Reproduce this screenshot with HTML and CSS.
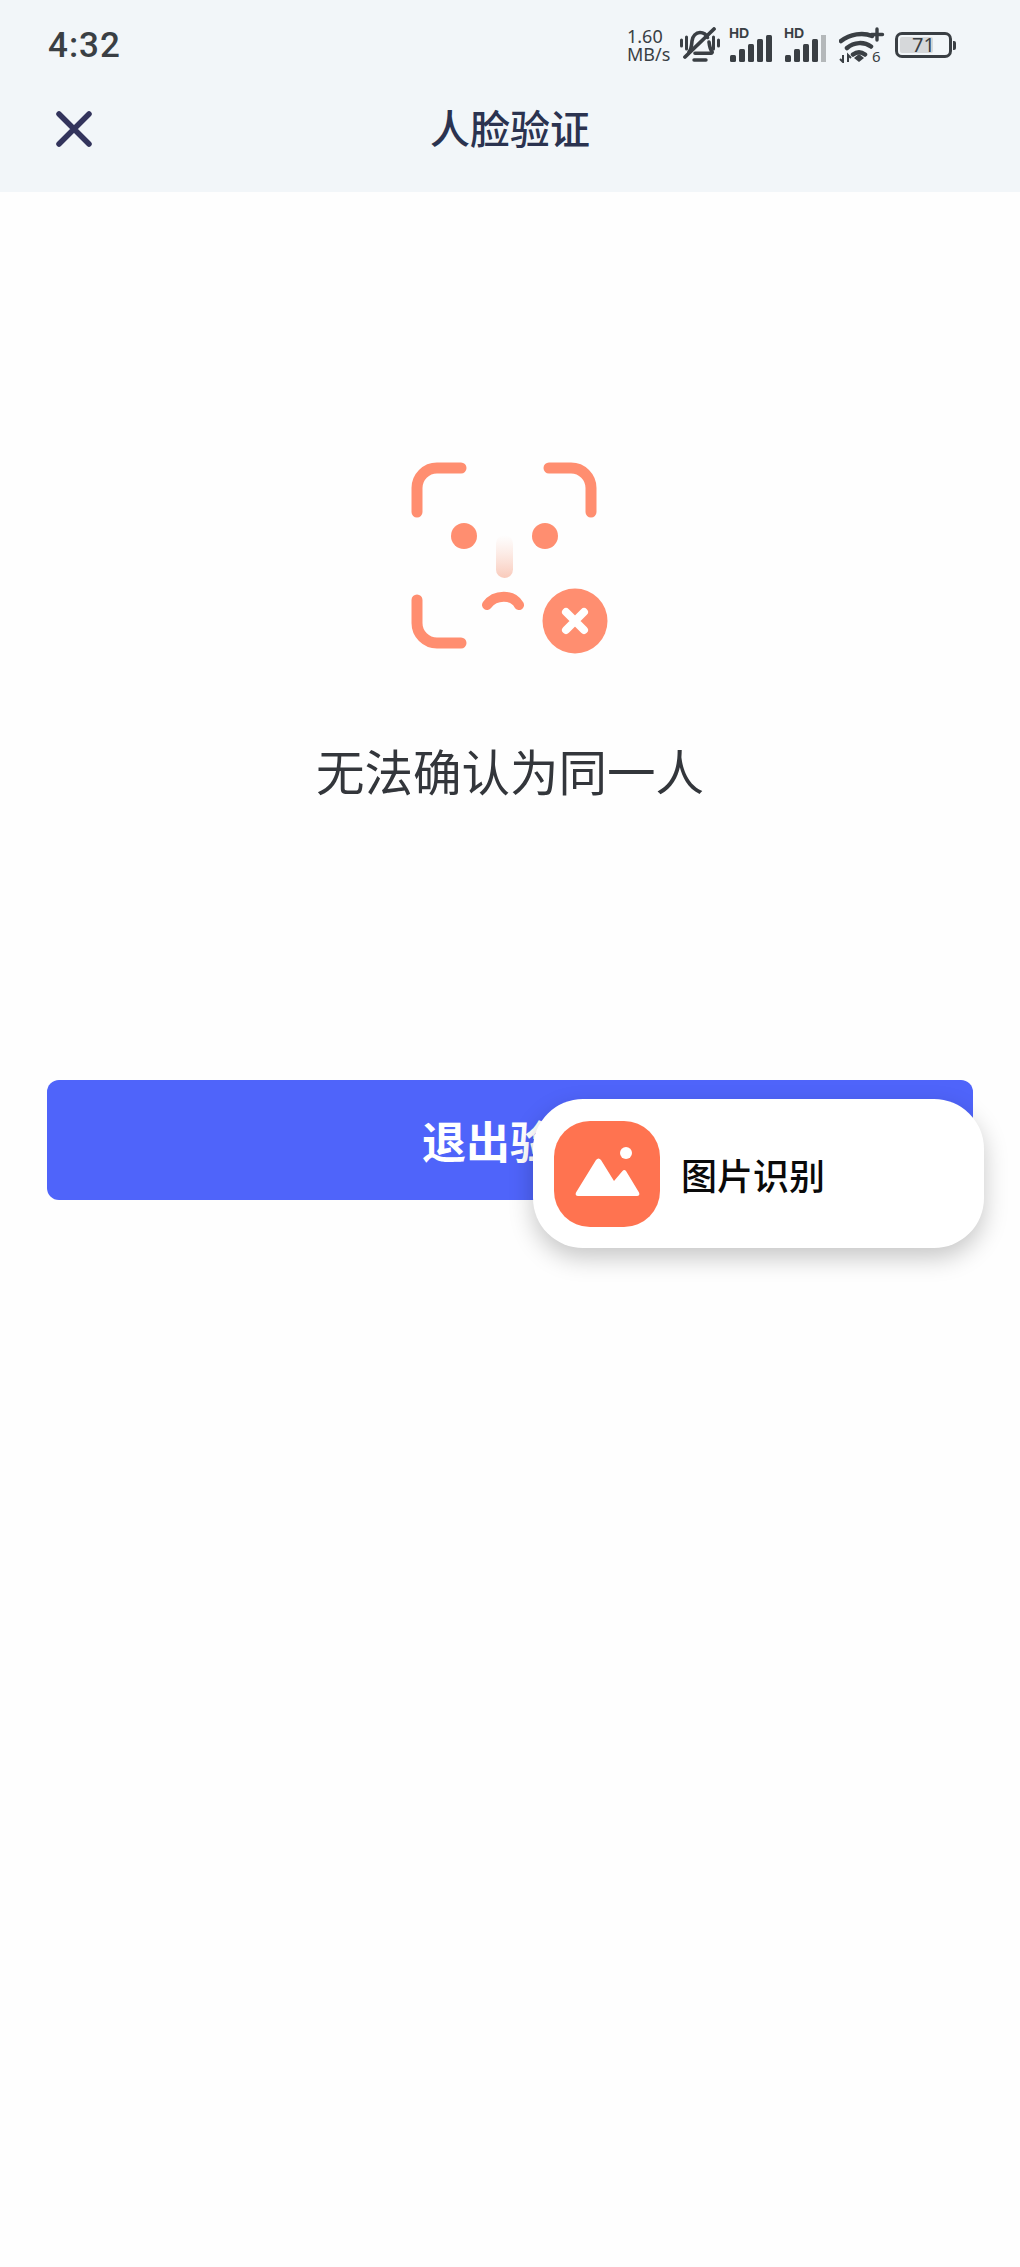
FILE: index.html
```html
<!DOCTYPE html>
<html lang="zh-CN">
  <head>
    <meta charset="UTF-8">
    <meta name="viewport" content="width=device-width, initial-scale=1">
    <title>人脸验证</title>
    <link rel="stylesheet" href="styles.css">
  </head>
  <body>
    <header class="top">
      <div class="status-bar">
        <span class="time">4:32</span>
        <div class="status-icons">
          <div class="speed">1.60 MB/s</div>
          <svg class="bell" viewBox="0 0 40 36" width="40" height="36">
            <path d="M9 25c2.500-3 2.500-6 3-11 .5-5 4-8.500 8-8.500 3.500 0 6 1.500 7.500 5M29 15c.5 4 1 7 3 9.500.6 1-.2 1.700-1 1.700H15" fill="none" stroke="#3a3f44" stroke-width="3.600" stroke-linecap="round"/>
            <path d="M34 2 5 30" stroke="#3a3f44" stroke-width="3.800" stroke-linecap="round"/>
            <path d="M1.500 13v6M6.500 10v12M33.500 10v12M38.500 13v6" stroke="#3a3f44" stroke-width="3" stroke-linecap="round"/>
            <path d="M14 33h12" stroke="#3a3f44" stroke-width="3.400" stroke-linecap="round"/>
          </svg>
          <div class="signal">
            <span class="hd">HD</span>
            <svg viewBox="0 0 44 28" width="44" height="28">
              <g fill="#3a3f44">
                <rect x="1" y="21" width="6" height="7" rx="1.500"/>
                <rect x="10" y="15" width="6" height="13" rx="1.500"/>
                <rect x="19" y="10" width="6" height="18" rx="1.500"/>
                <rect x="28" y="5" width="6" height="23" rx="1.500"/>
                <rect x="37" y="1" width="6" height="27" rx="1.500"/>
              </g>
            </svg>
          </div>
          <div class="signal">
            <span class="hd">HD</span>
            <svg viewBox="0 0 44 28" width="44" height="28">
              <g fill="#3a3f44">
                <rect x="1" y="21" width="6" height="7" rx="1.500"/>
                <rect x="10" y="15" width="6" height="13" rx="1.500"/>
                <rect x="19" y="10" width="6" height="18" rx="1.500"/>
                <rect x="28" y="5" width="6" height="23" rx="1.500"/>
              </g>
              <rect x="37" y="1" width="5" height="27" fill="#b4b8ba"/>
            </svg>
          </div>
          <div class="wifi">
            <svg viewBox="0 0 46 36" width="46" height="36">
              <path d="M2 14C11 7 24 5 33 9M8 21c7-6 17-6.500 24-1.500M14 27.500c4-3 8-3 12 0" fill="none" stroke="#3a3f44" stroke-width="4.500" stroke-linecap="round"/>
              <path d="M15 31l5-4 5 4-5 4z" fill="#3a3f44"/>
              <path d="M38 2v11M32.500 7.500h11" stroke="#3a3f44" stroke-width="3.400" stroke-linecap="round"/>
              <path d="M4 28v7L1 32M9 35v-7l3 3" fill="none" stroke="#3a3f44" stroke-width="2"/>
            </svg>
            <span class="wifi-num">6</span>
          </div>
          <div class="battery">
            <div class="battery-body">
              <div class="battery-fill"></div>
              <span class="battery-num">71</span>
            </div>
            <div class="battery-nub"></div>
          </div>
        </div>
      </div>
      <nav class="nav-bar">
        <svg class="close" viewBox="0 0 36 36" width="36" height="36">
          <path d="M3 3 33 33M33 3 3 33" stroke="#33345c" stroke-width="5.500" stroke-linecap="round"/>
        </svg>
        <h1 class="nav-title">人脸验证</h1>
      </nav>
    </header>

    <main class="content">
      <svg class="face" viewBox="0 0 240 240" width="240" height="240">
        <defs>
          <linearGradient id="nose" x1="0" y1="0" x2="0" y2="1">
            <stop offset="0" stop-color="#fbd9cd" stop-opacity="0"/>
            <stop offset="1" stop-color="#f9cabb"/>
          </linearGradient>
        </defs>
        <g fill="none" stroke="#ff8e70" stroke-width="11" stroke-linecap="round">
          <path d="M28 72V48a20 20 0 0 1 20-20h24"/>
          <path d="M160 28h22a20 20 0 0 1 20 20v24"/>
          <path d="M28 160v23a20 20 0 0 0 20 20h24"/>
          <path d="M98 165c8-11 26-11 32 0" stroke-width="10"/>
        </g>
        <circle cx="75" cy="96" r="13" fill="#ff8e70"/>
        <circle cx="156" cy="96" r="13" fill="#ff8e70"/>
        <rect x="107" y="95" width="17" height="43" rx="8.500" fill="url(#nose)"/>
        <circle cx="186" cy="181" r="32.500" fill="#ff8e70"/>
        <path d="M177 172l18 18M195 172l-18 18" stroke="#fff" stroke-width="8" stroke-linecap="round"/>
      </svg>
      <p class="message">无法确认为同一人</p>
      <button class="exit-btn" type="button">退出验证</button>
    </main>

    <div class="float-card">
      <div class="app-icon">
        <svg viewBox="0 0 106 106" width="106" height="106">
          <circle cx="72" cy="32" r="6" fill="#fff"/>
          <path d="M24 75h59c2 0 3-1.500 2-3.500L72 50c-1-1.500-2.500-1.500-3.500 0L60 60 47 39c-1.500-2-3.500-2-5 0L22 71.500c-1 2 0 3.500 2 3.500z" fill="#fff"/>
        </svg>
      </div>
      <span class="card-label">图片识别</span>
    </div>
  </body>
</html>
```

FILE: styles.css
```css
* {
  box-sizing: border-box;
}
body {
  margin: 0;
  position: relative;
  min-height: 2267px;
  background-color: #fefefe;
  font-family: "Noto Sans CJK SC", "Noto Sans", sans-serif;
}

/* top area */
.top {
  height: 192px;
  background-color: #f2f6f9;
}
.status-bar {
  display: flex;
  justify-content: space-between;
  align-items: center;
  height: 90px;
  padding: 0 64px 0 48px;
}
.time {
  font-family: Roboto, sans-serif;
  font-size: 35px;
  font-weight: 500;
  letter-spacing: 1px;
  color: #3a3f44;
}
.status-icons {
  display: flex;
  align-items: center;
  color: #3a3f44;
}
.speed {
  width: 53px;
  font-family: "Noto Sans", sans-serif;
  font-size: 18px;
  line-height: 18px;
}
.bell {
  margin-right: 9px;
}
.signal {
  position: relative;
  width: 44px;
  height: 34px;
  margin-right: 11px;
  display: flex;
  align-items: flex-end;
}
.hd {
  position: absolute;
  left: 0;
  top: -3px;
  font-family: "Liberation Sans", sans-serif;
  font-size: 14px;
  font-weight: 700;
  line-height: 16px;
}
.wifi {
  position: relative;
  width: 46px;
  height: 36px;
  margin-right: 10px;
}
.wifi-num {
  position: absolute;
  left: 33px;
  top: 21px;
  font-family: "Noto Sans", sans-serif;
  font-size: 15px;
  line-height: 16px;
}
.battery {
  display: flex;
  align-items: center;
  gap: 1px;
}
.battery-body {
  position: relative;
  width: 57px;
  height: 26px;
  border: 3px solid #3a3f44;
  border-radius: 7px;
  padding: 2px;
}
.battery-fill {
  width: 71%;
  height: 100%;
  background-color: #d6d8da;
  border-radius: 2px;
}
.battery-num {
  position: absolute;
  left: 0;
  right: 0;
  top: -1px;
  font-family: "Noto Sans", sans-serif;
  font-size: 20px;
  line-height: 22px;
  text-align: center;
}
.battery-nub {
  width: 3px;
  height: 9px;
  background-color: #3a3f44;
  border-radius: 0 2px 2px 0;
}
.nav-bar {
  position: relative;
  display: flex;
  align-items: center;
  justify-content: center;
  height: 80px;
  margin-top: -3px;
}
.close {
  position: absolute;
  left: 56px;
  top: 24px;
}
.nav-title {
  margin: 0;
  font-size: 40px;
  font-weight: 500;
  color: #2b3350;
  line-height: 56px;
}

/* result */
.content {
  display: flex;
  flex-direction: column;
  align-items: center;
  padding: 248px 47px 0;
}
.face {
  display: block;
  margin-left: -2px;
}
.message {
  margin: 55px 0 0;
  font-size: 48.500px;
  line-height: 70px;
  color: #33363b;
  text-align: center;
}
.exit-btn {
  width: 100%;
  height: 120px;
  margin-top: 275px;
  padding-bottom: 2px;
  background-color: #4f64fa;
  border: none;
  border-radius: 12px;
  color: white;
  font-family: inherit;
  font-size: 44px;
  font-weight: 700;
}

/* floating card over the button */
.float-card {
  position: absolute;
  left: 533px;
  top: 1099px;
  width: 451px;
  height: 149px;
  display: flex;
  align-items: center;
  gap: 21px;
  padding-left: 21px;
  background-color: white;
  border-radius: 50px;
  box-shadow: 0 10px 24px rgba(0, 0, 0, 0.22);
}
.app-icon {
  width: 106px;
  height: 106px;
  background-color: #ff7350;
  border-radius: 36px;
}
.app-icon svg {
  display: block;
}
.card-label {
  font-size: 36px;
  font-weight: 500;
  color: #0a0a0a;
}
```
